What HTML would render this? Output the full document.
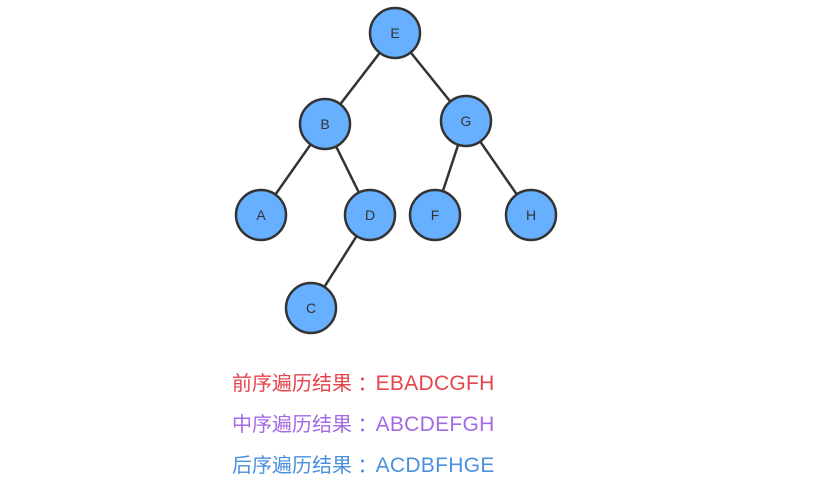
<!DOCTYPE html>
<html><head><meta charset="utf-8"><style>
html,body{margin:0;padding:0;background:#fff;width:817px;height:483px;overflow:hidden;position:relative}
.t{position:absolute;left:232px;font-family:"Liberation Sans","Noto Sans CJK SC",sans-serif;font-size:20px;line-height:24px;white-space:nowrap}
.t span{font-size:21px;margin-left:-2px;letter-spacing:0.3px}
</style></head><body>
<svg width="817" height="483" style="position:absolute;left:0;top:0">
<g stroke="#333" stroke-width="2.5">
<line x1="395" y1="33" x2="325" y2="124"/>
<line x1="395" y1="33" x2="466" y2="121"/>
<line x1="325" y1="124" x2="261" y2="215"/>
<line x1="325" y1="124" x2="370" y2="215"/>
<line x1="370" y1="215" x2="311" y2="308"/>
<line x1="466" y1="121" x2="435" y2="215"/>
<line x1="466" y1="121" x2="531" y2="215"/>
</g>
<g fill="#66b0ff" stroke="#333" stroke-width="2.5">
<circle cx="395" cy="33" r="25"/><circle cx="325" cy="124" r="25"/><circle cx="466" cy="121" r="25"/>
<circle cx="261" cy="215" r="25"/><circle cx="370" cy="215" r="25"/><circle cx="435" cy="215" r="25"/>
<circle cx="531" cy="215" r="25"/><circle cx="311" cy="308" r="25"/>
</g>
<g font-family="Liberation Sans,sans-serif" font-size="14" fill="#333" text-anchor="middle">
<text x="395" y="38">E</text><text x="325" y="129">B</text><text x="466" y="126">G</text>
<text x="261" y="220">A</text><text x="370" y="220">D</text><text x="435" y="220">F</text>
<text x="531" y="220">H</text><text x="311" y="313">C</text>
</g>
</svg>
<div class="t" style="top:372px;color:#e5444b">前序遍历结果 ：<span>EBADCGFH</span></div>
<div class="t" style="top:413px;color:#a46ae6">中序遍历结果 ：<span>ABCDEFGH</span></div>
<div class="t" style="top:454px;color:#4a90dd">后序遍历结果 ：<span>ACDBFHGE</span></div>
</body></html>
